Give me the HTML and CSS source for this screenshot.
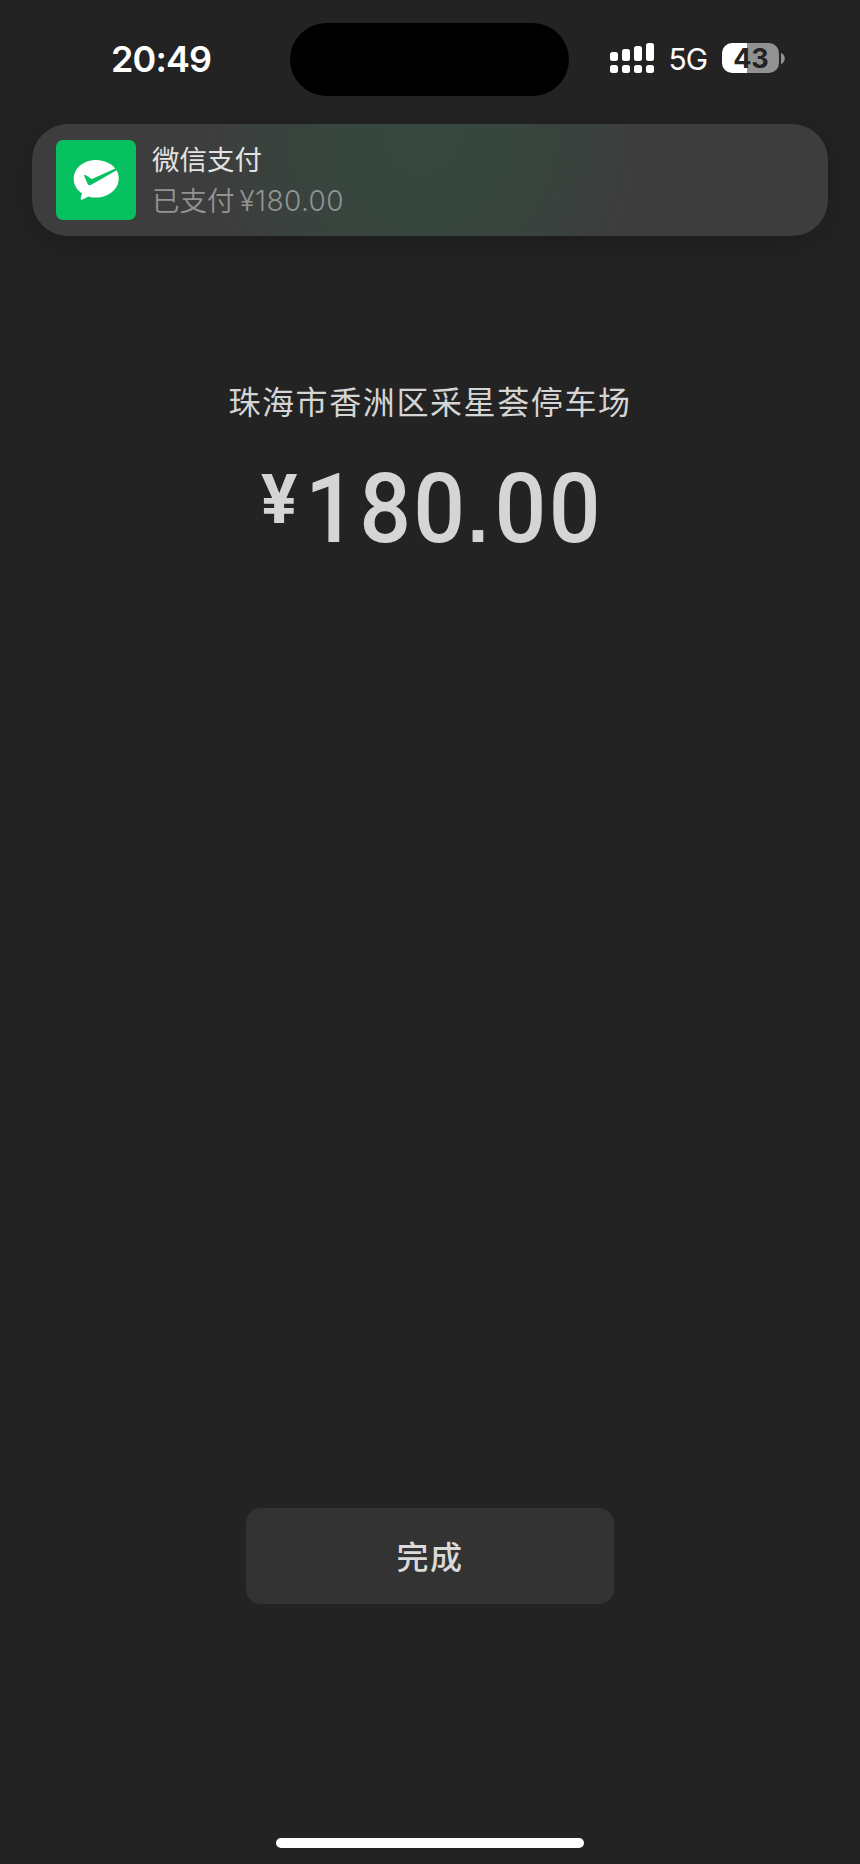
FILE: index.html
```html
<!DOCTYPE html>
<html lang="zh-CN">
<head>
  <meta charset="UTF-8" />
  <meta name="viewport" content="width=device-width, initial-scale=1.0" />
  <title>微信支付</title>
  <link rel="stylesheet" href="styles.css">
</head>
<body>

<div class="screen">
  <div class="status-bar">
    <div class="time">20:49</div>
    <div class="island"></div>
    <div class="status-right">
      <svg class="signal" viewBox="0 0 44 30" fill="#fff">
        <rect x="0" y="9" width="8" height="9" rx="2.5"/>
        <rect x="12" y="6" width="8" height="12" rx="2.5"/>
        <rect x="24" y="3" width="8" height="15" rx="2.5"/>
        <rect x="36" y="0" width="8" height="18" rx="2.5"/>
        <rect x="0" y="22" width="8" height="8" rx="2.5"/>
        <rect x="12" y="22" width="8" height="8" rx="2.5"/>
        <rect x="24" y="22" width="8" height="8" rx="2.5"/>
        <rect x="36" y="22" width="8" height="8" rx="2.5"/>
      </svg>
      <span class="network">5G</span>
      <div class="battery">43</div>
      <svg class="battery-tip" viewBox="0 0 4 11"><path d="M0 0C5 1.5 5 9.500 0 11Z" fill="#929292"/></svg>
    </div>
  </div>

  <div class="banner">
    <svg class="pay-icon" viewBox="0 0 80 80">
      <rect width="80" height="80" rx="7" fill="#07c160"/>
      <path d="M40 20C27.500 20 17.700 28.300 17.700 38.800C17.700 45 20.800 50 26 53.500L24.600 58.800Q24.600 60.300 26 59.700L32.500 56.400C35 57.200 37.500 57.600 40 57.600C52.500 57.600 62.700 49.300 62.700 38.800C62.700 35.300 61.900 32.600 60.600 30.300L34.800 44.900Q32.700 46 31.700 44L28.300 36.200Q27.800 34 29.500 35L34.900 38.500Q35.700 39.100 36.600 38.700L59.300 28.600C55.500 23.500 48.500 20 40 20Z" fill="#fff"/>
    </svg>
    <div class="banner-text">
      <div class="banner-title">微信支付</div>
      <div class="banner-desc">已支付<span>¥180.00</span></div>
    </div>
  </div>

  <div class="merchant">珠海市香洲区采星荟停车场</div>
  <div class="amount"><span class="currency">¥</span><span class="number">180<span class="dot">.</span>00</span></div>

  <button class="done">完成</button>
  <div class="home-indicator"></div>
</div>

</body>
</html>
```

FILE: styles.css
```css
* {
  box-sizing: border-box;
}
body {
  margin: 0;
  background: #232323;
  color: #d5d5d5;
  font-family: Inter, 'Noto Sans CJK SC', sans-serif;
}

.screen {
  height: 1864px;
  display: flex;
  flex-direction: column;
  align-items: center;
  overflow: hidden;
}

.status-bar {
  width: 100%;
  height: 124px;
  padding-top: 23px;
  display: flex;
  color: #fff;
}

.time {
  width: 290.4px;
  padding: 14px 0 0 111px;
  font-size: 36px;
  font-weight: 600;
  line-height: 44px;
  letter-spacing: -0.9px;
}

.island {
  width: 279px;
  height: 73px;
  border-radius: 37px;
  background: #000;
}

.status-right {
  display: flex;
  align-items: flex-start;
  padding: 20px 0 0 41px;
}

.signal {
  width: 44px;
  height: 30px;
}

.network {
  width: 68px;
  padding-left: 14px;
  font-size: 30px;
  line-height: 33px;
  letter-spacing: -0.8px;
}

.battery {
  width: 57px;
  height: 30px;
  border-radius: 10px;
  background: linear-gradient(to right, #fff 44%, #929292 44%);
  color: #232323;
  font-size: 27px;
  font-weight: 700;
  line-height: 31px;
  letter-spacing: -0.3px;
  text-align: center;
}

.battery-tip {
  width: 4px;
  height: 11px;
  margin: 10px 0 0 2px;
}

.banner {
  width: 796px;
  height: 112px;
  padding: 16px 24px;
  display: flex;
  border-radius: 36px;
  background: radial-gradient(ellipse 220px 220px at 390px 10px, #36483f 0%, #37463e 45%, #3d3d3d 100%) #3d3d3d;
  box-shadow: 0 6px 30px rgba(0, 0, 0, 0.2);
}

.pay-icon {
  width: 80px;
  height: 80px;
}

.banner-text {
  margin-left: 16px;
}

.banner-title {
  font-size: 27.5px;
  line-height: 40px;
  color: #e2e2e2;
}

.banner-desc {
  font-size: 27.5px;
  line-height: 43px;
  font-weight: 350;
  color: #939393;
}

.banner-desc span {
  margin-left: 5px;
  font-size: 28px;
  letter-spacing: 0.4px;
}

.merchant {
  margin-top: 143px;
  font-size: 32px;
  line-height: 48px;
  letter-spacing: 1.6px;
}

.amount {
  align-self: flex-start;
  margin-top: 24px;
  padding-left: 261px;
  display: flex;
  align-items: flex-start;
  font-family: Roboto, sans-serif;
  font-weight: 500;
}

.currency {
  font-size: 68px;
  font-weight: 700;
  line-height: 99px;
}

.number {
  margin-left: 8px;
  font-size: 97px;
  line-height: 116px;
  letter-spacing: 2.5px;
  transform: scaleX(0.94);
  transform-origin: left;
}

/* square decimal point */
.dot {
  display: inline-block;
  width: 28.7px;
  font-family: 'Liberation Sans', sans-serif;
  font-size: 80px;
  font-weight: 700;
  line-height: 1;
}

.done {
  width: 368px;
  height: 96px;
  margin-top: auto;
  padding: 0 0 2px;
  border: none;
  border-radius: 15px;
  background: #333;
  color: #dadada;
  font-family: inherit;
  font-size: 32px;
  font-weight: 500;
  letter-spacing: 1.6px;
  cursor: pointer;
}

.home-indicator {
  width: 308px;
  height: 10px;
  margin: 234px 0 16px;
  border-radius: 5px;
  background: #fff;
}
```
